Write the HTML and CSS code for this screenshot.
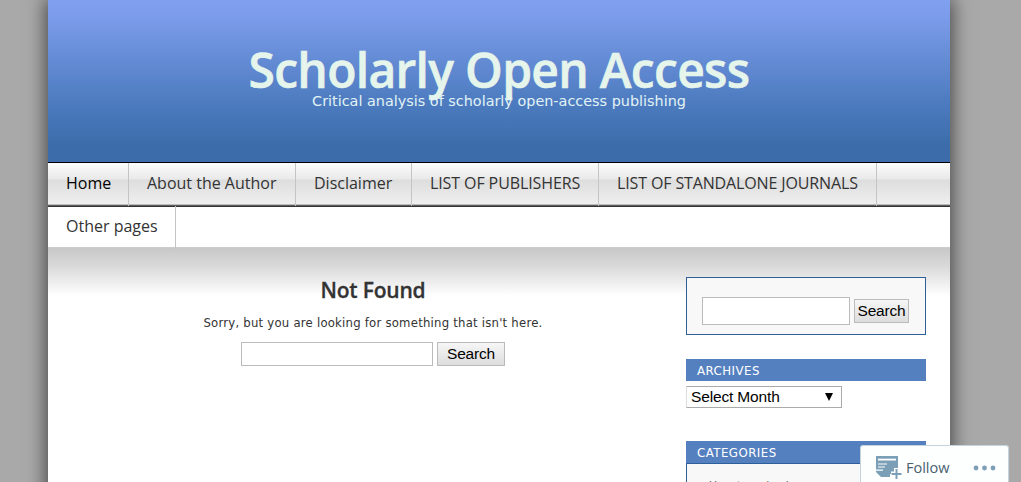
FILE: index.html
```
<!DOCTYPE html>
<html lang="en">
<head>
    <meta charset="UTF-8">
    <meta name="viewport" content="width=device-width, initial-scale=1.0">
    <title>Page not found | Scholarly Open Access</title>
    <link rel="stylesheet" href="styles.css">
</head>
<body>
    <div class="page">
        <header class="header">
            <h1 class="site-title">Scholarly Open Access</h1>
            <p class="tagline">Critical analysis of scholarly open-access publishing</p>
        </header>

        <nav class="menu">
            <a class="menu-item home current" href="#">Home</a>
            <a class="menu-item about" href="#">About the Author</a>
            <a class="menu-item disclaimer" href="#">Disclaimer</a>
            <a class="menu-item publishers" href="#">LIST OF PUBLISHERS</a>
            <a class="menu-item journals" href="#">LIST OF STANDALONE JOURNALS</a>
            <a class="menu-item other" href="#">Other pages</a>
        </nav>

        <div class="main">
            <div class="content">
                <h2 class="title">Not Found</h2>
                <p class="message">Sorry, but you are looking for something that isn't here.</p>
                <form class="search-form">
                    <input type="text" class="search-input">
                    <button type="button" class="search-btn">Search</button>
                </form>
            </div>

            <aside class="sidebar">
                <form class="search-form side-search">
                    <input type="text" class="search-input">
                    <button type="button" class="search-btn">Search</button>
                </form>

                <h3 class="side-title archives">Archives</h3>
                <div class="month-select"><span>Select Month</span><span class="arrow"></span></div>

                <h3 class="side-title categories">Categories</h3>
                <ul class="side-list">
                    <li>Uncategorized</li>
                </ul>
            </aside>
        </div>
    </div>

    <div class="follow-bar">
        <svg class="follow-icon" width="27" height="24" viewBox="0 0 27 24">
            <path fill="#7c9fb8" d="M0 0h22v14h-3v4h-5v3H5l-5-5z"/>
            <path stroke="#fff" stroke-width="1.8" d="M2 3.6h18"/>
            <path stroke="#fff" stroke-width="1.2" d="M2 8h9M2 11h7M0 14.2h7"/>
            <path stroke="#fff" stroke-width="5" d="M20.5 12v12M15 18h11"/>
            <path stroke="#7c9fb8" stroke-width="2" d="M20.5 13v10M15.5 18h10"/>
        </svg>
        <span class="follow-text">Follow</span>
        <svg class="dots" width="24" height="6" viewBox="0 0 24 6" fill="#7c9fb8">
            <circle cx="3" cy="3" r="2.4"/>
            <circle cx="11.5" cy="3" r="2.4"/>
            <circle cx="20" cy="3" r="2.4"/>
        </svg>
    </div>
</body>
</html>
```
FILE: styles.css
```
* {
    box-sizing: border-box;
}

body {
    margin: 0;
    height: 482px;
    overflow: hidden;
    background: #a9a9a9;
    font-family: Verdana, "DejaVu Sans", sans-serif;
    color: #333;
}

.page {
    width: 902px;
    height: 540px;
    margin-left: 48px;
    background: #fff;
    box-shadow: 0 0 18px 2px rgba(0,0,0,0.6);
}

/* header */
.header {
    height: 162px;
    padding-top: 40px;
    background: linear-gradient(#80a0f0 0, #7d9dec 14px, #4a79bd 108px, #3c6daa 145px, #3c6daa 162px);
    text-align: center;
}

.site-title {
    margin: 0;
    font: 600 48px/60px "Trebuchet MS", "Open Sans", sans-serif;
    letter-spacing: -0.7px;
    color: #e6f5ec;
    white-space: nowrap;
    -webkit-text-stroke: 0.6px #e6f5ec;
}

.tagline {
    margin: -7px 0 0;
    font-size: 14.4px;
    line-height: 16px;
    color: #e2f3f5;
}

/* menu */
.menu {
    display: flex;
    flex-wrap: wrap;
    align-content: flex-start;
    height: 86px;
    border-top: 1px solid #000;
    border-bottom: 1px solid #ccc;
    background: linear-gradient(#fcfcfc 0, #e9e9e9 16px, #ddd 17px, #efefef 41px, #888 42px, #333 43px, #333 44px, #fff 44px);
}

.menu-item {
    height: 43px;
    padding: 0 0 2px 18px;
    border-right: 1px solid #c4c4c4;
    font: 16px/41px "Trebuchet MS", "Open Sans", sans-serif;
    color: #333;
    text-decoration: none;
    white-space: nowrap;
}

.current {
    color: #000;
}

.home {
    width: 81px;
}

.about {
    width: 167px;
}

.disclaimer {
    width: 116px;
}

.publishers {
    width: 187px;
    letter-spacing: -0.1px;
}

.journals {
    width: 278px;
    letter-spacing: -0.13px;
}

.other {
    width: 128px;
}

/* content */
.main {
    display: flex;
    height: 292px;
    padding: 29px 24px 0 0;
    background: linear-gradient(#c8c8c8 0, #d9d9d9 18px, #fff 48px);
}

.content {
    width: 638px;
    padding-left: 12px;
    text-align: center;
}

.title {
    margin: 0;
    font: 600 21px/26px "Trebuchet MS", "Open Sans", sans-serif;
    letter-spacing: -0.2px;
    -webkit-text-stroke: 0.3px #333;
}

.message {
    margin: 12px 0 0;
    font-size: 11.7px;
    line-height: 16px;
    letter-spacing: 0.22px;
}

.search-form {
    display: flex;
    justify-content: center;
    gap: 4px;
    margin-top: 11px;
}

.search-input {
    width: 192px;
    height: 24px;
    border: 1px solid #bbb;
    background: #fff;
}

.search-btn {
    width: 68px;
    height: 24px;
    padding: 0;
    border: 1px solid #bbb;
    background: linear-gradient(#f6f6f6, #ddd);
    font: 15.5px "Liberation Sans", Arial, sans-serif;
    letter-spacing: -0.2px;
    color: #000;
}

/* sidebar */
.sidebar {
    width: 240px;
}

.side-search {
    justify-content: flex-start;
    align-items: center;
    height: 58px;
    margin: 0;
    padding: 9px 0 0 15px;
    border: 1px solid #2f5f98;
    background: #f8f8f8;
}

.side-search .search-input {
    width: 148px;
    height: 28px;
}

.side-search .search-btn {
    width: 55px;
}

.side-title {
    height: 22px;
    margin: 0;
    padding-left: 11px;
    background: #5580c0;
    font-size: 11.8px;
    font-weight: normal;
    line-height: 24px;
    letter-spacing: 0.45px;
    color: #fff;
    text-transform: uppercase;
}

.archives {
    margin-top: 24px;
}

.month-select {
    display: flex;
    justify-content: space-between;
    align-items: center;
    width: 156px;
    height: 22px;
    margin-top: 5px;
    padding: 0 8px 0 4px;
    border: 1px solid #aaa;
    border-left-color: #ddd;
    background: #fff;
    font: 15.5px "Liberation Sans", Arial, sans-serif;
    letter-spacing: -0.15px;
    color: #000;
}

.arrow {
    border: 4px solid transparent;
    border-top: 8px solid #000;
    border-bottom: 0;
}

.categories {
    margin-top: 33px;
}

.side-list {
    height: 60px;
    margin: 0;
    padding: 13px 0 0 22px;
    border: 1px solid #2f5f98;
    background: #f8f8f8;
    font-size: 11px;
    line-height: 17px;
    color: #666;
    list-style: none;
}

/* follow bar over the page corner */
.follow-bar {
    position: fixed;
    right: 12px;
    bottom: 0;
    display: flex;
    align-items: center;
    width: 149px;
    height: 37px;
    padding: 7px 0 0 15px;
    border: 1px solid #c5d3de;
    border-bottom: 0;
    border-radius: 3px 3px 0 0;
    background: #fdfefe;
}

.follow-text {
    width: 67px;
    margin-left: 3px;
    font: 14.5px "Open Sans", sans-serif;
    color: #48606f;
}
```
